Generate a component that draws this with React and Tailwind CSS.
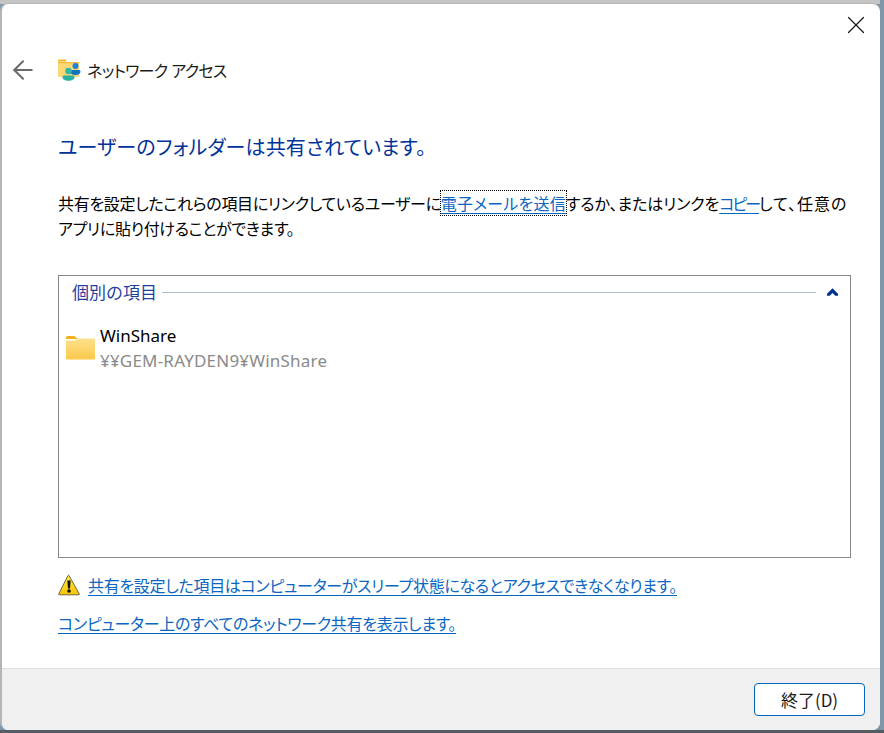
import React from "react";
import { ArrowLeft, X } from "lucide-react";

const jp = "font-['Noto_Sans_CJK_JP','Liberation_Sans',sans-serif]";
const link = "text-[#0a66c2] underline underline-offset-[3px] decoration-[#0067c0]";

function SharedFolderIcon() {
  return (
    <svg width="24" height="24" viewBox="0 0 24 24">
      <path d="M1 2.5a1 1 0 0 1 1-1h6l2.5 2H1z" fill="#f5b623" />
      <path d="M1 4h20.5a.7.7 0 0 1 .7.7V18a1 1 0 0 1-1 1H2a1 1 0 0 1-1-1z" fill="#fcd776" />
      <path d="M1 4h20.5a.7.7 0 0 1 .7.7v.5H1z" fill="#f0b93a" />
      <circle cx="18.5" cy="8" r="3" fill="#1e82d8" />
      <path d="M13 13.5a1.5 1.5 0 0 1 1.5-1.5h7.5a1.5 1.5 0 0 1 1.5 1.5c0 2-2 3.5-5 3.5s-5.500-1.500-5.500-3.500z" fill="#1670c4" />
      <circle cx="11.500" cy="13" r="3.300" fill="#2fb8a6" />
      <path d="M5.500 19a1.500 1.500 0 0 1 1.500-1.500h9a1.500 1.500 0 0 1 1.500 1.500c0 2.500-2.500 3.800-6 3.800s-6-1.300-6-3.800z" fill="#27b3a0" />
    </svg>
  );
}

function FolderIcon() {
  return (
    <svg width="29" height="24" viewBox="0 0 29 24" className="mt-[13px] shrink-0">
      <defs>
        <linearGradient id="folderFill" x1="0" y1="0" x2="0" y2="1">
          <stop offset="0" stopColor="#fde08e" />
          <stop offset="1" stopColor="#fbc948" />
        </linearGradient>
      </defs>
      <path d="M0 1.500A1.500 1.500 0 0 1 1.500 0h7l3 3H0z" fill="#f5b01e" />
      <path d="M0 4.500h8.500l3-2H28a1 1 0 0 1 1 1V22.500a1 1 0 0 1-1 1H1a1 1 0 0 1-1-1z" fill="url(#folderFill)" />
    </svg>
  );
}

function WarningIcon() {
  return (
    <svg width="22" height="22" viewBox="0 0 22 22">
      <defs>
        <linearGradient id="warnFill" x1="0" y1="0" x2="0" y2="1">
          <stop offset="0" stopColor="#ffe94d" />
          <stop offset="1" stopColor="#f7c300" />
        </linearGradient>
      </defs>
      <path d="M11 1.500 21.300 20a.6.6 0 0 1-.5.800H1.200a.6.6 0 0 1-.5-.800L10 1.500a.6.6 0 0 1 1 0z" fill="url(#warnFill)" stroke="#6f6440" strokeWidth="1" />
      <path d="M9.300 6.500h3.400l-.7 8h-2z" fill="#111" />
      <circle cx="11" cy="17" r="1.800" fill="#111" />
    </svg>
  );
}

export default function App() {
  return (
    <div className={`w-[884px] h-[733px] overflow-hidden flex flex-col bg-[#7d96aa] ${jp}`}>
      <div className="h-[4px] w-[880px] shrink-0 bg-[#c4c4c4]" />
      <div className="w-[880px] h-[727px] shrink-0 -mt-px flex flex-col bg-white rounded-[8px] border-l-2 border-t border-[#b5b5b5] overflow-hidden">
        <div className="flex-1 flex flex-col">
          <div className="flex justify-end pt-[6px] pr-[9px]">
            <X size={30} strokeWidth={1} className="text-[#1a1a1a]" />
          </div>
          <div className="flex items-center mt-[17px] h-[26px]">
            <ArrowLeft size={30} strokeWidth={1.6} className="ml-[6px] text-[#6a6a6a]" />
            <div className="ml-[19px]"><SharedFolderIcon /></div>
            <span className="ml-[6px] text-[16px] tracking-[-0.7px] [word-spacing:1px] text-[#1a1a1a] [font-feature-settings:'palt']">ネットワーク アクセス</span>
          </div>
          <h1 className="ml-[56px] mt-[49px] text-[20px] tracking-[0.15px] leading-[30px] text-[#003399] [font-feature-settings:'palt']">ユーザーのフォルダーは共有されています。</h1>
          <p className="ml-[56px] mt-[29px] w-[810px] text-[16px] tracking-[-0.3px] leading-[25px] text-black [font-feature-settings:'palt']">
            共有を設定したこれらの項目にリンクしているユーザーに
            <span className={`${link} tracking-[0.2px] outline-1 outline-dotted outline-black`}>電子メールを送信</span>
            <span className="tracking-[-0.1px]">するか、またはリンクを</span>
            <span className={`${link} tracking-[-2px]`}>コピー</span>
            <span className="tracking-[1px]">して、任意の</span>
            <br />
            アプリに貼り付けることができます。
          </p>
          <section className="ml-[56px] mt-[34px] w-[793px] h-[283px] border border-[#84878c] pl-[13px] pr-[12px] pt-[5px]">
            <div className="flex items-center">
              <span className="text-[17px] leading-[22px] text-[#1f3f9f]">個別の項目</span>
              <div className="flex-1 h-px ml-[5px] bg-[#b0bcd8]" />
              <svg width="11" height="8" viewBox="0 0 12 8" className="ml-[11px]">
                <path d="M6 0 12 6v2H9L6 5 3 8H0V6z" fill="#003399" />
              </svg>
            </div>
            <div className="flex items-start -ml-[6px] mt-[20px]">
              <FolderIcon />
              <div className="ml-[5px] font-['Noto_Sans','Noto_Sans_CJK_JP',sans-serif]">
                <div className="text-[17px] leading-[25px] text-black">WinShare</div>
                <div className="text-[17px] tracking-[0.2px] leading-[25px] text-[#8a8a8a]">¥¥GEM-RAYDEN9¥WinShare</div>
              </div>
            </div>
          </section>
          <div className="flex items-center ml-[56px] mt-[15px] h-[24px]">
            <WarningIcon />
            <span className={`ml-[8px] text-[16px] tracking-[-0.3px] [font-feature-settings:'palt'] ${link}`}>共有を設定した項目はコンピューターがスリープ状態になるとアクセスできなくなります。</span>
          </div>
          <div className="ml-[56px] mt-[14px] h-[24px]">
            <span className={`text-[16px] tracking-[-0.3px] [font-feature-settings:'palt'] ${link}`}>コンピューター上のすべてのネットワーク共有を表示します。</span>
          </div>
        </div>
        <footer className="h-[62px] shrink-0 bg-[#f0f0f0] border-t border-[#dfdfdf] flex justify-end pt-[14px] pr-[15px]">
          <button className="w-[111px] h-[33px] rounded-[4px] bg-white border border-[#0067c0] text-[17px] text-[#1a1a1a]">終了(D)</button>
        </footer>
      </div>
      <div className="flex-1 bg-[#555b62] w-[884px]" />
    </div>
  );
}
